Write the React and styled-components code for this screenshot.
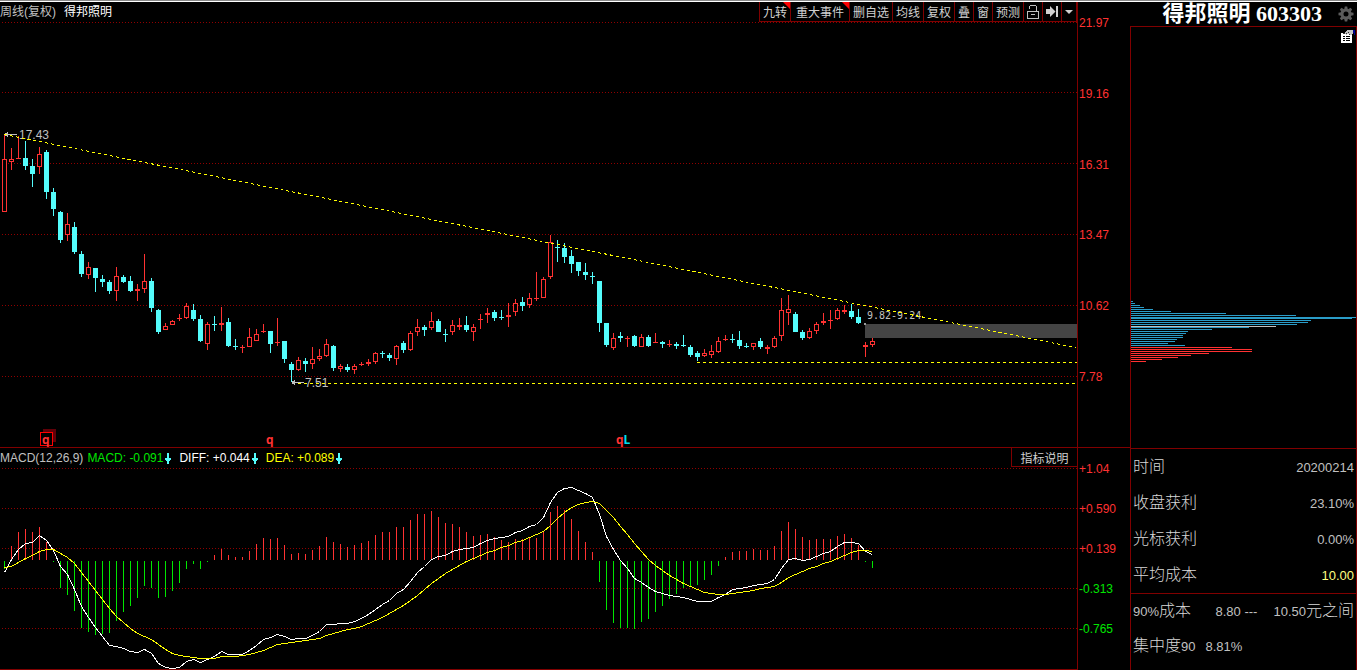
import styled, { createGlobalStyle } from "styled-components";

const GlobalStyle = createGlobalStyle`
    * {
        box-sizing: border-box;
    }
    body {
        margin: 0;
        background: #000;
        color: #c0c0c0;
        font-family: "Liberation Sans", "Noto Sans CJK SC", sans-serif;
        font-size: 12px;
    }
    button {
        margin: 0;
        padding: 0;
        border: 0;
        background: none;
        color: inherit;
        font: inherit;
        cursor: pointer;
    }
`

const StyledTopLine = styled.div`
    height: 2px;
    border-top: 1px solid #8a8a8a;
    background: #fff;
`

const StyledPage = styled.div`
    display: grid;
    grid-template-columns: minmax(0, 1fr) 227px;
`

const StyledCharts = styled.main`
    display: grid;
    grid-template-columns: minmax(0, 1fr) 53px;
`

const StyledPanel = styled.section`
    border-bottom: 1px solid #800000;
    overflow: hidden;
`

const StyledBar = styled.div`
    display: flex;
    justify-content: space-between;
    align-items: center;
    height: 20px;
    white-space: nowrap;
`

const StyledChartName = styled.div`
    display: flex;
    gap: 8px;
    line-height: 20px;

    b {
        font-weight: 400;
        color: #fff;
    }
`

const StyledToolbar = styled.div`
    display: flex;
    height: 20px;
    border-right: 1px solid #800000;
`

const StyledTool = styled.button`
    position: relative;
    display: flex;
    align-items: center;
    justify-content: center;
    min-width: ${(props) => (props.$narrow ? 14 : 19)}px;
    padding: 0 ${(props) => (props.$wide ? 5 : 3)}px;
    border-left: 1px solid #800000;
    border-bottom: 1px solid #800000;
    color: #d0d0d0;

    &:hover {
        color: #fff;
    }
`

const StyledFlag = styled.span`
    position: absolute;
    top: 0;
    right: 0;
    border-top: 7px solid #f00;
    border-left: 7px solid transparent;
`

const StyledSvg = styled.svg`
    display: block;
    width: 100%;
    height: ${(props) => props.$height}px;
`

const StyledAxis = styled.div`
    display: flex;
    flex-direction: column;
    justify-content: space-between;
    padding: 14px 0 ${(props) => props.$bottom}px 1px;
    border-left: 1px solid #800000;
    border-bottom: ${(props) => (props.$last ? "0" : "1px solid #800000")};
`

const StyledTick = styled.span`
    line-height: 14px;
    color: ${(props) => (props.$down ? "#00e600" : "#ff3232")};
`

const StyledReadings = styled.div`
    display: flex;
    align-items: center;
    gap: 4px;
`

const StyledReading = styled.span`
    display: flex;
    align-items: center;
    gap: 2px;
    margin-right: 3px;
    color: ${(props) => props.$color};
`

const StyledHelp = styled.button`
    align-self: flex-start;
    width: 66px;
    height: 19px;
    border-left: 1px solid #800000;
    border-bottom: 1px solid #800000;
    color: #d0d0d0;
`

const StyledSide = styled.aside`
    display: flex;
    flex-direction: column;
`

const StyledSideHead = styled.header`
    display: flex;
    align-items: center;
    justify-content: flex-end;
    gap: 16px;
    height: 24px;
    padding-right: 3px;
`

const StyledStock = styled.h1`
    margin: 0;
    color: #fff;
    font-family: "Liberation Serif", "Noto Sans CJK SC", serif;
    font-size: 22px;
    font-weight: 700;
    line-height: 26px;
    white-space: nowrap;
`

const StyledIconButton = styled.button`
    display: flex;
`

const StyledSideBody = styled.div`
    flex: 1;
    border: 1px solid #800000;
    border-bottom: 0;
`

const StyledCost = styled.div`
    display: flex;
    flex-direction: column;
    height: 421px;
`

const StyledCostTool = styled.div`
    display: flex;
    justify-content: flex-end;
    height: 16px;
    padding: 3px 1px 0 0;
`

const StyledFacts = styled.dl`
    margin: 0;
    border-top: 1px solid #800000;
`

const StyledFact = styled.div`
    display: flex;
    align-items: center;
    justify-content: ${(props) => (props.$left ? "flex-start" : "space-between")};
    gap: 10px;
    height: ${(props) => (props.$short ? 34 : 36)}px;
    padding: 0 2px;
    font-size: 13px;
    white-space: nowrap;

    dt,
    dd {
        margin: 0;
        display: flex;
        align-items: center;
    }
    dd {
        color: ${(props) => props.$color || "#c0c0c0"};
    }
`

const StyledHan = styled.span`
    color: #d8d8d8;
    font-size: 16px;
    font-weight: 300;
    line-height: 20px;
`

const StyledRange = styled.span`
    margin-right: 16px;
`

const RED = "#ff3232";
const CYAN = "#54fcfc";
const STEP = 7;
const slotX = (i) => 4 + i * STEP;

// 1 = up, 0 = down, then high, body top, body bottom, low
const candles = [
    [1, 135, 159, 212, 212], [1, 148, 159, 162, 170], [1, 136, 158, 159, 159], [0, 141, 158, 166, 170],
    [0, 159, 166, 174, 187], [1, 147, 154, 167, 174], [0, 150, 152, 192, 199], [0, 188, 192, 209, 216],
    [0, 211, 212, 240, 243], [1, 213, 224, 235, 241], [0, 222, 227, 252, 254], [0, 251, 254, 274, 277],
    [1, 262, 267, 275, 279], [0, 268, 268, 278, 292], [0, 275, 279, 282, 287], [0, 280, 282, 291, 294],
    [1, 267, 276, 291, 301], [0, 275, 277, 282, 283], [0, 276, 281, 291, 292], [1, 284, 289, 291, 301],
    [1, 254, 281, 289, 293], [0, 278, 281, 308, 312], [0, 309, 310, 332, 334], [1, 323, 326, 330, 330],
    [1, 320, 321, 325, 325], [1, 314, 318, 319, 321], [1, 303, 306, 318, 319], [0, 304, 310, 319, 321],
    [0, 315, 319, 341, 342], [1, 322, 324, 344, 350], [0, 316, 324, 325, 331], [1, 307, 323, 325, 331],
    [0, 318, 322, 346, 347], [0, 339, 346, 347, 350], [1, 345, 347, 348, 353], [1, 328, 337, 347, 347],
    [1, 329, 334, 341, 341], [1, 324, 331, 332, 333], [0, 331, 331, 344, 353], [1, 318, 342, 343, 346],
    [0, 341, 341, 359, 363], [0, 362, 364, 370, 382], [1, 357, 360, 370, 371], [0, 358, 361, 364, 372],
    [1, 347, 359, 364, 369], [1, 349, 356, 359, 361], [1, 339, 344, 356, 357], [0, 345, 346, 368, 371],
    [1, 364, 366, 369, 372], [0, 364, 367, 370, 372], [1, 364, 366, 370, 374], [1, 362, 364, 365, 366],
    [1, 359, 362, 364, 366], [1, 352, 353, 362, 364], [0, 351, 353, 354, 358], [0, 353, 355, 358, 361],
    [1, 345, 346, 359, 365], [0, 341, 343, 350, 353], [1, 331, 333, 350, 351], [1, 319, 327, 332, 336],
    [0, 325, 327, 330, 336], [1, 312, 321, 328, 330], [0, 319, 321, 332, 332], [0, 329, 334, 335, 342],
    [1, 320, 325, 332, 335], [1, 318, 325, 327, 330], [0, 316, 325, 330, 332], [1, 324, 327, 332, 341],
    [1, 314, 319, 320, 329], [1, 308, 313, 315, 323], [0, 310, 312, 318, 321], [0, 310, 317, 318, 320],
    [1, 303, 315, 317, 327], [1, 299, 303, 312, 316], [0, 297, 302, 306, 311], [1, 293, 298, 305, 308],
    [1, 272, 298, 299, 301], [1, 277, 279, 298, 298], [1, 235, 242, 277, 279], [0, 240, 247, 248, 262],
    [0, 243, 248, 257, 263], [0, 250, 256, 264, 273], [0, 262, 262, 271, 276], [0, 263, 272, 275, 280],
    [0, 272, 276, 277, 284], [0, 281, 281, 323, 332], [0, 323, 323, 345, 347], [1, 333, 338, 348, 350],
    [0, 332, 336, 338, 342], [1, 336, 338, 339, 347], [0, 335, 336, 346, 347], [1, 334, 337, 347, 347],
    [0, 335, 337, 346, 347], [1, 333, 342, 343, 343], [0, 341, 342, 344, 348], [1, 340, 344, 345, 347],
    [0, 342, 344, 346, 349], [0, 335, 345, 346, 347], [0, 345, 347, 355, 357], [0, 351, 353, 357, 361],
    [1, 349, 353, 356, 357], [1, 345, 351, 355, 358], [1, 337, 341, 352, 353], [1, 335, 339, 340, 341],
    [0, 334, 339, 340, 343], [0, 331, 340, 346, 349], [0, 343, 346, 347, 348], [1, 343, 343, 347, 350],
    [0, 338, 341, 347, 349], [1, 345, 347, 349, 354], [1, 336, 338, 347, 348], [1, 298, 310, 336, 341],
    [1, 295, 309, 313, 325], [0, 312, 314, 332, 332], [0, 330, 332, 338, 340], [1, 328, 331, 338, 339],
    [1, 322, 324, 331, 334], [1, 313, 321, 323, 325], [1, 310, 320, 321, 329], [1, 308, 310, 319, 320],
    [1, 305, 310, 312, 314], [0, 304, 311, 317, 319], [0, 309, 317, 323, 324], [1, 342, 345, 347, 357],
    [1, 338, 341, 345, 347],
];

const macd = [
    569, 546, 532, 529, 532, 527, 542, 562, 588, 595, 611, 628, 632, 635, 634, 633, 621, 612, 606, 598,
    586, 588, 598, 597, 591, 583, 569, 564, 569, 562, 555, 549, 555, 557, 557, 551, 544, 538, 539, 538,
    545, 554, 553, 554, 550, 546, 537, 542, 544, 547, 545, 543, 541, 535, 532, 532, 527, 527, 520, 514,
    514, 511, 517, 523, 524, 527, 532, 536, 535, 534, 537, 540, 542, 539, 539, 537, 538, 531, 512, 506,
    510, 519, 531, 542, 552, 582, 610, 623, 628, 628, 629, 622, 619, 612, 606, 599, 594, 588, 587, 585,
    580, 575, 566, 557, 552, 551, 551, 549, 550, 550, 546, 531, 522, 529, 537, 540, 539, 539, 539, 536,
    534, 538, 545, 562, 568,
];

const diff = [
    572, 559, 549, 543, 542, 535, 540, 550, 566, 574, 589, 606, 617, 627, 636, 645, 646, 648, 651, 652,
    649, 653, 663, 667, 668, 667, 661, 659, 662, 659, 656, 651, 654, 654, 654, 650, 645, 639, 637, 634,
    636, 639, 638, 638, 635, 631, 624, 624, 623, 623, 621, 618, 614, 609, 604, 600, 593, 589, 581, 572,
    566, 559, 556, 555, 551, 549, 548, 547, 543, 540, 538, 537, 536, 532, 530, 526, 524, 517, 502, 492,
    488, 487, 490, 493, 497, 514, 536, 549, 560, 568, 578, 582, 587, 591, 593, 595, 596, 597, 599, 601,
    601, 601, 597, 594, 589, 588, 587, 585, 584, 583, 579, 568, 559, 558, 560, 559, 556, 553, 551, 546,
    542, 542, 543, 551, 554,
];

const dea = [
    567, 566, 562, 558, 555, 551, 549, 549, 553, 557, 563, 572, 581, 590, 599, 608, 616, 622, 628, 633,
    636, 639, 644, 649, 653, 655, 656, 657, 658, 658, 658, 656, 656, 656, 655, 654, 652, 650, 647, 644,
    643, 642, 641, 640, 639, 638, 635, 633, 631, 629, 628, 626, 623, 620, 617, 613, 609, 605, 600, 595,
    589, 583, 578, 573, 569, 565, 561, 558, 555, 552, 550, 547, 545, 542, 540, 537, 534, 531, 525, 518,
    512, 507, 504, 502, 501, 503, 510, 517, 526, 534, 543, 551, 559, 565, 570, 575, 579, 583, 586, 589,
    592, 593, 594, 594, 593, 592, 591, 590, 588, 587, 586, 582, 577, 574, 571, 568, 566, 563, 561, 558,
    555, 552, 550, 550, 551,
];

// y, length, colour of each row in the cost distribution
const BLUE = "#2a9cc8";
const costs = [
    [301, 2, BLUE], [303, 4, BLUE], [305, 9, BLUE], [307, 13, BLUE], [309, 22, BLUE], [311, 40, BLUE],
    [313, 95, BLUE], [315, 165, BLUE], [317, 225, BLUE], [318, 221, BLUE], [320, 180, BLUE],
    [322, 177, BLUE], [324, 166, BLUE], [326, 145, "#c0c0c0"], [327, 118, BLUE], [329, 81, BLUE],
    [331, 57, BLUE], [333, 55, BLUE], [335, 52, BLUE], [337, 52, BLUE], [339, 46, BLUE], [341, 44, BLUE],
    [343, 37, BLUE], [345, 54, BLUE], [347, 101, RED], [349, 121, RED], [351, 121, RED], [353, 78, RED],
    [355, 60, RED], [357, 47, RED], [359, 31, RED], [361, 15, RED],
];

const tools = [
    { name: "九转", flag: true },
    { name: "重大事件", flag: true, wide: true },
    { name: "删自选" },
    { name: "均线" },
    { name: "复权" },
    { name: "叠" },
    { name: "窗" },
    { name: "预测" },
];

const linePoints = (values) => values.map((y, i) => `${slotX(i) + 0.5},${y + 0.5}`).join(" ");

const GridLines = ({ rows }) => rows.map((y) => (
    <line key={y} x1="2" x2="100%" y1={y + 0.5} y2={y + 0.5} stroke="#900000" strokeDasharray="1 2" />
));

const Candle = ({ x, data }) => {
    const [up, high, top, bottom, low] = data;
    const color = up ? RED : CYAN;
    return (
        <g>
            <rect x={x} y={high} width="1" height={low - high} fill={color} />
            {up && bottom - top > 2 ? (
                <rect x={x - 1.5} y={top + 0.5} width="4" height={bottom - top - 1} fill="#000" stroke={color} />
            ) : (
                <rect x={x - 2} y={top} width="5" height={bottom - top} fill={color} />
            )}
        </g>
    );
}

const Pointer = ({ x, y }) => (
    <path d={`M${x} ${y}h12v1h-12zM${x} ${y - 1}h3v3h-3zM${x + 2} ${y - 2}h1v5h-1z`} fill="#c0c0c0" />
);

const PriceChart = () => (
    <StyledSvg $height={425} shapeRendering="crispEdges" role="img" aria-label="周线">
        <g transform="translate(0 -22)">
            <GridLines rows={[22, 92, 163, 234, 305, 376]} />
            <rect x="865" y="324" width="212" height="14" fill="#444" />
            <rect x="864" y="323" width="2" height="2" fill="#999" />
            {candles.map((c, i) => <Candle key={i} x={slotX(i)} data={c} />)}

            <g fill="#c0c0c0" fontSize="12">
                <text x="19" y="139">17.43</text>
                <text x="305" y="387">7.51</text>
                <text x="867" y="319" fontFamily="DejaVu Sans Mono, monospace" fontSize="10">9.82-9.24</text>
            </g>
            <Pointer x={5} y={134} />
            <Pointer x={292} y={382} />
            <g stroke="#ff0" strokeDasharray="3 3">
                <line x1="4" y1="134.5" x2="1076" y2="347.5" />
                <line x1="298" y1="383.5" x2="1076" y2="383.5" />
                <line x1="697" y1="362.5" x2="1077" y2="362.5" />
            </g>

            <rect x="43" y="429" width="13" height="13" fill="#600008" />
            <rect x="40.5" y="432.5" width="12" height="13" fill="#000" stroke="#f00" />
            <g fill={RED} fontFamily="Open Sans, sans-serif" fontSize="12" fontWeight="700">
                <text x="42" y="444">q</text>
                <text x="266" y="444">q</text>
                <text x="616" y="444">q<tspan fill="#00e0f0">L</tspan></text>
            </g>
        </g>
    </StyledSvg>
);

const MacdChart = () => (
    <StyledSvg $height={201} shapeRendering="crispEdges" role="img" aria-label="MACD">
        <g transform="translate(0 -468)">
            <GridLines rows={[468, 508, 548, 588, 628]} />
            {macd.map((y, i) => (
                y < 561
                    ? <rect key={i} x={slotX(i)} y={y} width="1" height={560 - y} fill={RED} />
                    : <rect key={i} x={slotX(i)} y="561" width="1" height={y - 561} fill="#00e600" />
            ))}
            <polyline points={linePoints(diff)} fill="none" stroke="#fff" />
            <polyline points={linePoints(dea)} fill="none" stroke="#ff0" />
        </g>
    </StyledSvg>
);

const DownArrow = () => (
    <svg width="7" height="11" viewBox="0 0 7 11" shapeRendering="crispEdges">
        <path d="M2 0h2v5h2v2h-1v1h-1v3h-2v-3h-1v-1h-1v-2h2z" fill={CYAN} />
    </svg>
);

const Gear = () => (
    <svg width="16" height="16" viewBox="-8 -8 16 16">
        <circle r="4" fill="none" stroke="#5c5c5c" strokeWidth="3" />
        {[0, 45, 90, 135, 180, 225, 270, 315].map((deg) => (
            <path key={deg} d="M-1.8 -4.5L-1.2 -7.5H1.2L1.8 -4.5z" fill="#5c5c5c" transform={`rotate(${deg})`} />
        ))}
    </svg>
);

const NoteIcon = () => (
    <svg width="14" height="13" viewBox="0 0 14 13" shapeRendering="crispEdges">
        <path d="M0 3h11v10h-11z" fill="#fff" />
        <path d="M2 6h2v1h-2zM5 6h4v1h-4zM2 8h2v1h-2zM5 8h4v1h-4zM2 10h2v1h-2zM5 10h4v1h-4z" fill="#000" />
        <path d="M3 3l3-3h6v3l-2 2h-1l-2-1-2 1z" fill="#c0c0c0" />
        <path d="M5 3h1v1h-1zM7 2h1v1h-1zM8 4h1v1h-1zM2 3h2v1h-2z" fill="#333" />
        <path d="M12 0h2v5h-1v-2h-1z" fill="#000090" />
    </svg>
);

const App = () => {
    return (
        <>
            <GlobalStyle />
            <StyledTopLine />
            <StyledPage>
                <StyledCharts>
                    <StyledPanel>
                        <StyledBar>
                            <StyledChartName>周线(复权) <b>得邦照明</b></StyledChartName>
                            <StyledToolbar>
                                {tools.map((tool) => (
                                    <StyledTool key={tool.name} $wide={tool.wide}>
                                        {tool.name}
                                        {tool.flag && <StyledFlag />}
                                    </StyledTool>
                                ))}
                                <StyledTool aria-label="锁定">
                                    <svg width="12" height="14" viewBox="0 0 12 14" fill="#c0c0c0" shapeRendering="crispEdges">
                                        <path d="M0 6h12v8h-12zM1 7v6h10v-6z" fillRule="evenodd" />
                                        <path d="M3 0h6v1h-6zM2 1h1v3h-1zM9 1h1v5h-1zM4 9h4v1h-4z" />
                                    </svg>
                                </StyledTool>
                                <StyledTool aria-label="移到最后">
                                    <svg width="12" height="11" viewBox="0 0 12 11" fill="#d0d0d0">
                                        <path d="M0 3h4V0l5.5 5.5L4 11V8H0zM10 0H12v11h-2z" />
                                    </svg>
                                </StyledTool>
                                <StyledTool $narrow aria-label="更多">
                                    <svg width="8" height="4" viewBox="0 0 8 4" fill="#d0d0d0">
                                        <path d="M0 0h8L4 4z" />
                                    </svg>
                                </StyledTool>
                            </StyledToolbar>
                        </StyledBar>
                        <PriceChart />
                    </StyledPanel>
                    <StyledAxis $bottom={63}>
                        {["21.97", "19.16", "16.31", "13.47", "10.62", "7.78"].map((v) => (
                            <StyledTick key={v}>{v}</StyledTick>
                        ))}
                    </StyledAxis>

                    <StyledPanel>
                        <StyledBar>
                            <StyledReadings>
                                <span>MACD(12,26,9)</span>
                                <StyledReading $color="#00e600">MACD: -0.091 <DownArrow /></StyledReading>
                                <StyledReading $color="#fff">DIFF: +0.044 <DownArrow /></StyledReading>
                                <StyledReading $color="#ff0">DEA: +0.089 <DownArrow /></StyledReading>
                            </StyledReadings>
                            <StyledHelp>指标说明</StyledHelp>
                        </StyledBar>
                        <MacdChart />
                    </StyledPanel>
                    <StyledAxis $bottom={34} $last>
                        {["+1.04", "+0.590", "+0.139", "-0.313", "-0.765"].map((v) => (
                            <StyledTick key={v} $down={v[0] === "-"}>{v}</StyledTick>
                        ))}
                    </StyledAxis>
                </StyledCharts>

                <StyledSide>
                    <StyledSideHead>
                        <StyledStock>得邦照明 603303</StyledStock>
                        <StyledIconButton aria-label="设置"><Gear /></StyledIconButton>
                    </StyledSideHead>
                    <StyledSideBody>
                        <StyledCost>
                            <StyledCostTool>
                                <StyledIconButton aria-label="说明"><NoteIcon /></StyledIconButton>
                            </StyledCostTool>
                            <StyledSvg $height={405} shapeRendering="crispEdges" role="img" aria-label="成本分布">
                                <g transform="translate(0 -43)">
                                    {costs.map(([y, w, color]) => (
                                        <rect key={y} x="0" y={y} width={w} height="1" fill={color} />
                                    ))}
                                </g>
                            </StyledSvg>
                        </StyledCost>
                        <StyledFacts>
                            <StyledFact>
                                <dt><StyledHan>时间</StyledHan></dt>
                                <dd>20200214</dd>
                            </StyledFact>
                            <StyledFact>
                                <dt><StyledHan>收盘获利</StyledHan></dt>
                                <dd>23.10%</dd>
                            </StyledFact>
                            <StyledFact>
                                <dt><StyledHan>光标获利</StyledHan></dt>
                                <dd>0.00%</dd>
                            </StyledFact>
                            <StyledFact $color="#ffff80">
                                <dt><StyledHan>平均成本</StyledHan></dt>
                                <dd>10.00</dd>
                            </StyledFact>
                        </StyledFacts>
                        <StyledFacts>
                            <StyledFact $short>
                                <dt>90%<StyledHan>成本</StyledHan></dt>
                                <dd>
                                    <StyledRange>8.80 ---</StyledRange>
                                    10.50<StyledHan>元之间</StyledHan>
                                </dd>
                            </StyledFact>
                            <StyledFact $left>
                                <dt><StyledHan>集中度</StyledHan>90</dt>
                                <dd>8.81%</dd>
                            </StyledFact>
                        </StyledFacts>
                    </StyledSideBody>
                </StyledSide>
            </StyledPage>
        </>
    );
}

export default App;
